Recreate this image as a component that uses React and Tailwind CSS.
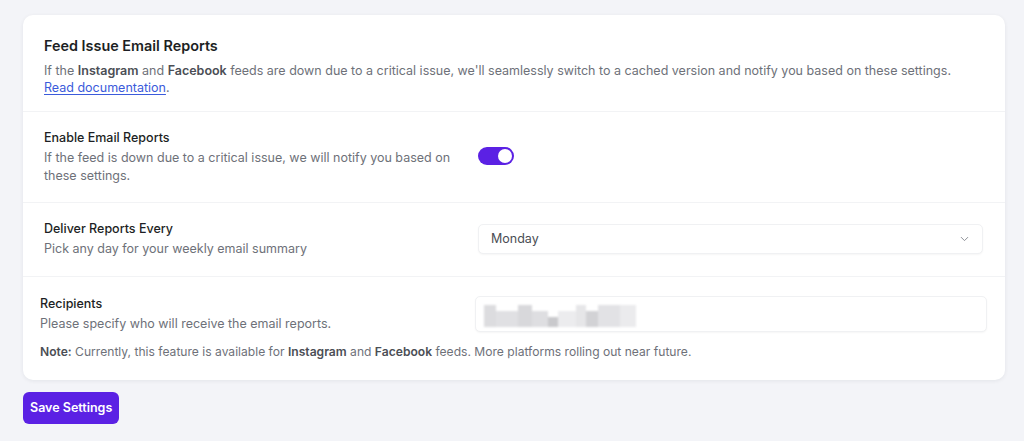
import React, { useState } from "react";

function Toggle({ on, onChange }) {
  return (
    <button
      type="button"
      onClick={() => onChange(!on)}
      className={`relative inline-flex h-[18px] w-9 items-center rounded-full transition-colors ${
        on ? "bg-[#5b21e4]" : "bg-gray-300"
      }`}
    >
      <span
        className={`inline-block h-[14px] w-[14px] rounded-full bg-white transition-transform ${
          on ? "translate-x-[20px]" : "translate-x-[2px]"
        }`}
      />
    </button>
  );
}

function RowText({ title, children }) {
  return (
    <div>
      <div className="text-[12.5px] font-medium leading-[18px] text-[#1d1f24]">{title}</div>
      <p className="mt-[2px] text-[12.5px] leading-[18px] text-[#6e7179]">{children}</p>
    </div>
  );
}

export default function App() {
  const [enabled, setEnabled] = useState(true);
  const [day, setDay] = useState("Monday");

  return (
    <div
      className="min-h-[441px] bg-[#f3f4f8] pl-[23px] pr-[19px] pt-[15px]"
      style={{ fontFamily: "Inter, 'Noto Sans', sans-serif" }}
    >
      <div className="rounded-[10px] bg-white shadow-[0_1px_4px_rgba(20,24,40,0.07)]">
        {/* Header */}
        <div className="border-b border-[#f2f3f5] px-[21px] pb-[15px] pt-[21px]">
          <h2 className="text-[14.4px] font-semibold leading-[20px] text-[#1d1f24]">
            Feed Issue Email Reports
          </h2>
          <p className="mt-[6px] text-[12.5px] leading-[17px] text-[#6e7179]">
            If the <span className="font-semibold text-[#4b4e55]">Instagram</span> and{" "}
            <span className="font-semibold text-[#4b4e55]">Facebook</span> feeds are down due to a
            critical issue, we'll seamlessly switch to a cached version and notify you based on these
            settings.
            <br />
            <a href="#" className="text-[#3b5bdb] underline underline-offset-2">
              Read documentation
            </a>
            .
          </p>
        </div>

        {/* Enable */}
        <div className="grid grid-cols-[434px_1fr] items-center border-b border-[#f2f3f5] px-[21px] pb-[17px] pt-[17px]">
          <RowText title="Enable Email Reports">
            If the feed is down due to a critical issue, we will notify you based on these settings.
          </RowText>
          <div>
            <Toggle on={enabled} onChange={setEnabled} />
          </div>
        </div>

        {/* Deliver */}
        <div className="grid grid-cols-[434px_1fr] items-center border-b border-[#f2f3f5] pb-[18px] pl-[21px] pr-[22px] pt-[17px]">
          <RowText title="Deliver Reports Every">Pick any day for your weekly email summary</RowText>
          <div className="relative">
            <select
              value={day}
              onChange={(e) => setDay(e.target.value)}
              className="h-[30px] w-full appearance-none rounded-[5px] border border-[#f0f1f3] bg-white pl-[12px] text-[12.5px] text-[#4b4e55] shadow-[0_1px_2px_rgba(0,0,0,0.04)] outline-none"
            >
              {["Monday", "Tuesday", "Wednesday", "Thursday", "Friday", "Saturday", "Sunday"].map((d) => (
                <option key={d}>{d}</option>
              ))}
            </select>
            <svg
              className="pointer-events-none absolute right-[12px] top-1/2 h-[13px] w-[13px] -translate-y-1/2 text-[#8a8d94]"
              viewBox="0 0 24 24"
              fill="none"
              stroke="currentColor"
              strokeWidth="1.8"
              strokeLinecap="round"
              strokeLinejoin="round"
            >
              <path d="m6 9 6 6 6-6" />
            </svg>
          </div>
        </div>

        {/* Recipients */}
        <div className="pb-[20px] pl-[17px] pr-[18px] pt-[18px]">
          <div className="grid grid-cols-[435px_1fr] items-center">
            <RowText title="Recipients">Please specify who will receive the email reports.</RowText>
            <div className="flex h-[36px] items-center rounded-[5px] border border-[#f0f1f3] bg-white pl-[8px] shadow-[0_1px_2px_rgba(0,0,0,0.04)]">
              {/* blurred address */}
              <div className="flex h-[26px] items-end blur-[1px]">
                <div className="h-[22px] w-[12px] bg-[#dcdcdf]" />
                <div className="h-[16px] w-[22px] bg-[#e0e0e3]" />
                <div className="h-[22px] w-[14px] bg-[#d8d8db]" />
                <div className="h-[16px] w-[16px] bg-[#dedee1]" />
                <div className="h-[10px] w-[10px] bg-[#c9c9cc]" />
                <div className="h-[16px] w-[18px] bg-[#ececee]" />
                <div className="h-[22px] w-[10px] bg-[#e6e6e8]" />
                <div className="h-[16px] w-[12px] bg-[#d2d2d5]" />
                <div className="h-[22px] w-[22px] bg-[#e2e2e5]" />
                <div className="h-[22px] w-[16px] bg-[#ebebed]" />
              </div>
            </div>
          </div>
          <p className="mt-[11px] text-[12.1px] leading-[16px] text-[#6e7179]">
            <span className="font-semibold text-[#4b4e55]">Note:</span> Currently, this feature is
            available for <span className="font-semibold text-[#4b4e55]">Instagram</span> and{" "}
            <span className="font-semibold text-[#4b4e55]">Facebook</span> feeds. More platforms
            rolling out near future.
          </p>
        </div>
      </div>

      <button
        type="button"
        className="mt-[12px] h-[32px] rounded-[6px] bg-[#5b21e4] px-[7px] text-[12.5px] font-semibold text-white"
      >
        Save Settings
      </button>
    </div>
  );
}
